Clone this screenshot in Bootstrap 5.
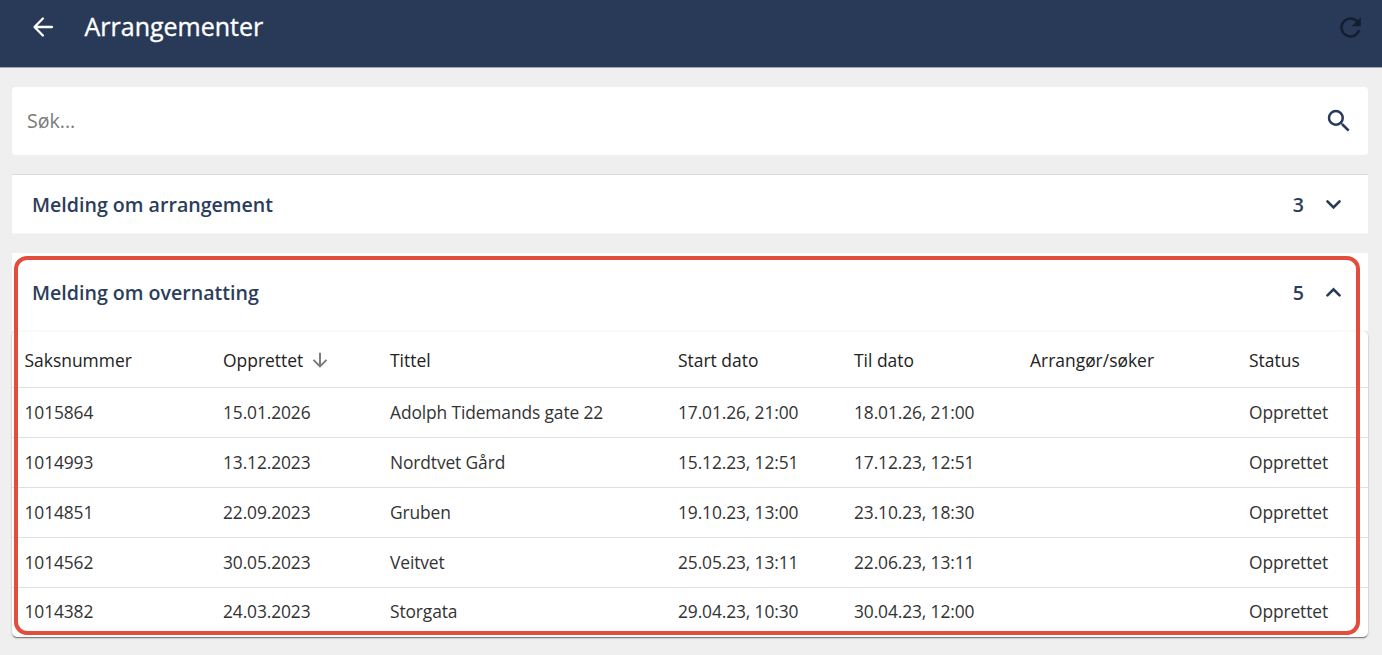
<!DOCTYPE html>
<html lang="no">
<head>
<meta charset="utf-8">
<meta name="viewport" content="width=device-width, initial-scale=1">
<title>Arrangementer</title>
<link href="https://cdn.jsdelivr.net/npm/bootstrap@5.3.0/dist/css/bootstrap.min.css" rel="stylesheet">
<style>
body{font-family:"Open Sans",sans-serif;background:#efefef;height:655px;overflow:hidden;color:#333}
.topbar{background:#283a58;height:68px;border-bottom:1px solid #a0a8b8;padding:0 16.5px 13px 28px}
.topbar h1{font-size:25px;font-weight:500;color:#fff;line-height:34px;margin-left:26.5px;padding-bottom:2px;-webkit-text-stroke:.35px #fff}
.page{padding:19px 14px 0 12px}
.searchbox{height:68px;border-radius:4px;padding:0 14px 0 15px;margin-bottom:19px}
.searchbox input{font-size:19.6px;color:#777;line-height:28px}
.searchbox input::placeholder{color:#7b7b7b}
.panel-head{font-size:19.6px;font-weight:600;color:#2b3d5b;padding:0 20px}
.panel-a{height:60px;border-top:1px solid #dadada;border-bottom:1px solid #f6f6f6;margin-bottom:19px}
.panel-a span{padding-top:1px}
.panel-b{height:78px;padding-top:2px}
.panel-b svg{margin-bottom:2px}
.count{margin-right:15px}
.list-table{height:306px;border-top:1px solid #f8f8f8;border-radius:5px;box-shadow:0 2px 1px -1px rgba(0,0,0,.3),0 1px 2px rgba(0,0,0,.35)}
.cases{table-layout:fixed;font-size:17.4px;margin:0;--bs-table-bg:transparent;--bs-table-color:#333}
.cases>:not(caption)>*>*{padding:0;border-bottom:1px solid #e0e0e0;vertical-align:middle;white-space:nowrap;line-height:24px}
.cases thead th{height:55px;font-size:17.45px;font-weight:500;color:#222;padding-top:1px}
.cases thead svg{margin:-4px 0 0 2px}
.cases tbody td{height:50px;letter-spacing:-.12px}
.cases>tbody>tr:last-child>td{border-bottom:0;height:48px}
.cases tr>:first-child{padding-left:12.5px}
.marker{left:14px;top:256px;width:1346px;height:379px;border:4px solid #e34d3b;border-radius:13px;pointer-events:none}
</style>
</head>
<body>
<header class="topbar d-flex align-items-center">
  <svg width="30" height="30" viewBox="0 0 30 30" fill="none" stroke="#fff" stroke-width="2.3" stroke-linecap="round" stroke-linejoin="round"><path d="M24 15H6.8M14.9 6.5 6.5 15l8.4 8.5"/></svg>
  <h1 class="mb-0">Arrangementer</h1>
  <svg class="ms-auto" width="31" height="31" viewBox="0 0 24 24" fill="#131f2e"><path d="M17.65 6.35A7.96 7.96 0 0 0 12 4a8 8 0 1 0 7.73 10h-2.08A6 6 0 1 1 12 6c1.66 0 3.14.69 4.22 1.78L13 11h7V4z"/></svg>
</header>
<main class="page">
  <div class="searchbox bg-white d-flex align-items-center">
    <input class="border-0 bg-transparent flex-grow-1 p-0" type="text" placeholder="Søk...">
    <svg width="30" height="30" viewBox="0 0 24 24" fill="#283a58"><path d="M15.5 14h-.79l-.28-.27A6.47 6.47 0 0 0 16 9.5 6.5 6.5 0 1 0 9.5 16c1.61 0 3.09-.59 4.23-1.57l.27.28v.79l5 4.99L20.49 19zm-6 0a4.5 4.5 0 1 1 0-9 4.5 4.5 0 0 1 0 9"/></svg>
  </div>
  <section class="panel-head panel-a bg-white d-flex align-items-center">
    <span>Melding om arrangement</span><span class="count ms-auto">3</span>
    <svg width="29" height="29" viewBox="0 0 24 24" fill="none" stroke="#283a58" stroke-width="2.2" stroke-linecap="round"><path d="m7 9.4 5 5 5-5"/></svg>
  </section>
  <section class="panel-head panel-b bg-white d-flex align-items-center">
    <span>Melding om overnatting</span><span class="count ms-auto">5</span>
    <svg width="29" height="29" viewBox="0 0 24 24" fill="none" stroke="#283a58" stroke-width="2.2" stroke-linecap="round"><path d="m7 14.4 5-5 5 5"/></svg>
  </section>
  <div class="list-table bg-white">
    <table class="table cases">
      <colgroup><col style="width:211px"><col style="width:167px"><col style="width:288px"><col style="width:176px"><col style="width:176px"><col style="width:219px"><col></colgroup>
      <thead><tr><th>Saksnummer</th><th>Opprettet <svg width="20" height="20" viewBox="0 0 20 20" fill="none" stroke="#777" stroke-width="1.9"><path d="M10 2.7v14M3.5 9.8l6.5 6.6 6.5-6.6"/></svg></th><th>Tittel</th><th>Start dato</th><th>Til dato</th><th>Arrangør/søker</th><th>Status</th></tr></thead>
      <tbody>
        <tr><td>1015864</td><td>15.01.2026</td><td>Adolph Tidemands gate 22</td><td>17.01.26, 21:00</td><td>18.01.26, 21:00</td><td></td><td>Opprettet</td></tr>
        <tr><td>1014993</td><td>13.12.2023</td><td>Nordtvet Gård</td><td>15.12.23, 12:51</td><td>17.12.23, 12:51</td><td></td><td>Opprettet</td></tr>
        <tr><td>1014851</td><td>22.09.2023</td><td>Gruben</td><td>19.10.23, 13:00</td><td>23.10.23, 18:30</td><td></td><td>Opprettet</td></tr>
        <tr><td>1014562</td><td>30.05.2023</td><td>Veitvet</td><td>25.05.23, 13:11</td><td>22.06.23, 13:11</td><td></td><td>Opprettet</td></tr>
        <tr><td>1014382</td><td>24.03.2023</td><td>Storgata</td><td>29.04.23, 10:30</td><td>30.04.23, 12:00</td><td></td><td>Opprettet</td></tr>
      </tbody>
    </table>
  </div>
</main>
<div class="marker position-absolute"></div>
<script src="https://cdn.jsdelivr.net/npm/bootstrap@5.3.0/dist/js/bootstrap.bundle.min.js"></script>
</body>
</html>
